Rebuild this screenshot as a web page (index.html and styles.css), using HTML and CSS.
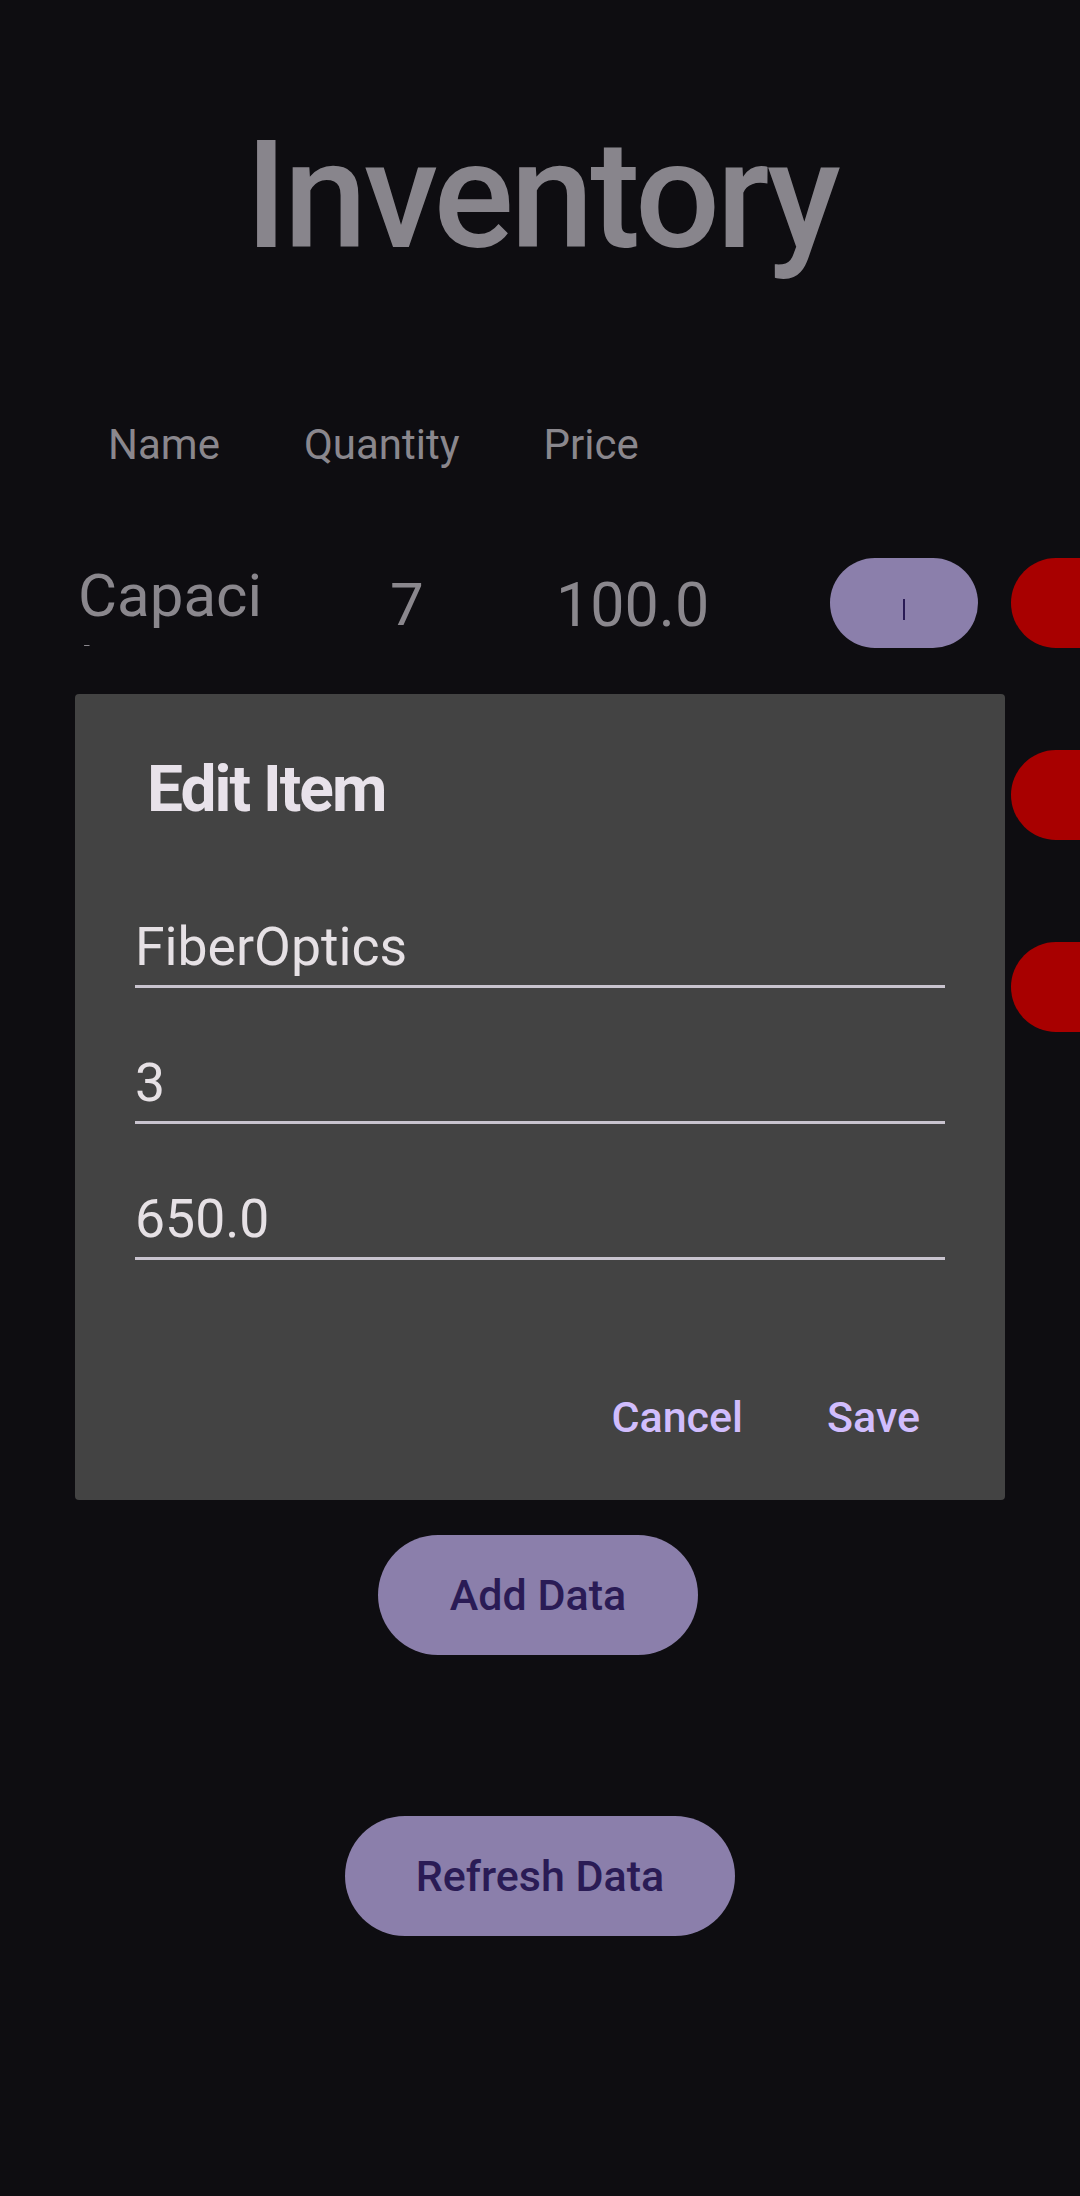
FILE: index.html
```html
<!DOCTYPE html>
<html lang="en">
<head>
<meta charset="utf-8">
<title>Inventory</title>
<link rel="stylesheet" href="styles.css">
</head>
<body>
<main class="screen">
  <h1 class="title">Inventory</h1>

  <div class="header-row">
    <span class="head">Name</span>
    <span class="head">Quantity</span>
    <span class="head">Price</span>
  </div>

  <div class="list">
    <div class="row">
      <div class="cell name">Capacitor</div>
      <div class="cell qty">7</div>
      <div class="cell price">100.0</div>
      <button class="pill edit" type="button" aria-label="Edit"><span class="edit-mark"></span></button>
      <button class="pill delete" type="button" aria-label="Delete"></button>
    </div>
    <div class="row">
      <div class="cell name"></div>
      <div class="cell qty"></div>
      <div class="cell price"></div>
      <button class="pill edit" type="button" aria-label="Edit"></button>
      <button class="pill delete" type="button" aria-label="Delete"></button>
    </div>
    <div class="row">
      <div class="cell name"></div>
      <div class="cell qty"></div>
      <div class="cell price"></div>
      <button class="pill edit" type="button" aria-label="Edit"></button>
      <button class="pill delete" type="button" aria-label="Delete"></button>
    </div>
  </div>

  <button class="action add" type="button">Add Data</button>
  <button class="action refresh" type="button">Refresh Data</button>
</main>

<div class="dialog" role="dialog" aria-label="Edit Item">
  <h2 class="dialog-title">Edit Item</h2>
  <div class="fields">
    <div class="field">FiberOptics</div>
    <div class="field">3</div>
    <div class="field">650.0</div>
  </div>
  <div class="dialog-actions">
    <span class="text-btn">Cancel</span>
    <span class="text-btn">Save</span>
  </div>
</div>
</body>
</html>
```

FILE: styles.css
```css
html, body {
  margin: 0;
  padding: 0;
  width: 1080px;
  height: 2196px;
  overflow: hidden;
  background: #0e0d11;
  font-family: Roboto, "Noto Sans", "Liberation Sans", sans-serif;
}

.screen {
  position: relative;
  display: flex;
  flex-direction: column;
  align-items: stretch;
  width: 1080px;
  height: 2196px;
}

.title {
  margin: 0;
  padding-top: 108px;
  padding-left: 2px;
  font-size: 150px;
  font-weight: 500;
  letter-spacing: -3.6px;
  line-height: 176px;
  text-align: center;
  color: #88858c;
}

.header-row {
  display: flex;
  gap: 84px;
  margin-top: 136px;
  padding-left: 108px;
  font-size: 42px;
  line-height: 49px;
  color: #8a878d;
}

.list {
  display: flex;
  flex-direction: column;
  gap: 102px;
  margin-top: 89px;
}

.row {
  display: flex;
  align-items: center;
  height: 90px;
  padding-left: 78px;
  font-size: 60px;
  color: #8a878d;
}

.cell {
  flex: none;
  line-height: 70px;
}

.name {
  align-self: flex-start;
  width: 192px;
  height: 84px;
  margin-top: 4px;
  line-height: 68px;
  overflow: hidden;
  word-break: break-all;
}

.qty {
  width: 166px;
  margin-left: 120px;
  margin-top: 3px;
}

.price {
  width: 274px;
  margin-top: 3px;
  font-size: 61px;
}

.pill {
  flex: none;
  display: flex;
  align-items: center;
  justify-content: center;
  width: 148px;
  height: 90px;
  border: 0;
  border-radius: 45px;
  padding: 0;
}

.edit {
  background: #8b7fab;
}

.edit-mark {
  display: block;
  width: 2px;
  height: 21px;
  margin-top: 12px;
  background: #2a1b55;
}

.delete {
  margin-left: 33px;
  background: #a80000;
}

.action {
  align-self: center;
  height: 120px;
  border: 0;
  border-radius: 60px;
  background: #8b7fab;
  color: #2a1b55;
  font-family: Roboto, "Noto Sans", sans-serif;
  font-size: 43px;
  font-weight: 500;
  padding: 0;
}

.add {
  width: 320px;
  margin-top: 503px;
  margin-left: -4px;
}

.refresh {
  width: 390px;
  margin-top: 161px;
}

.dialog {
  position: absolute;
  left: 75px;
  top: 694px;
  width: 930px;
  height: 806px;
  box-sizing: border-box;
  background: #434343;
  border-radius: 4px;
  padding-top: 58px;
  display: flex;
  flex-direction: column;
}

.dialog-title {
  margin: 0 0 0 72px;
  font-size: 64px;
  font-weight: 700;
  letter-spacing: -2px;
  line-height: 75px;
  color: #e8e2ea;
}

.fields {
  display: flex;
  flex-direction: column;
  gap: 64px;
  margin: 89px 60px 0;
}

.field {
  font-size: 53.5px;
  line-height: 61px;
  padding-bottom: 8px;
  border-bottom: 3px solid #c9c4cf;
  color: #e6e1e5;
}

.dialog-actions {
  display: flex;
  justify-content: flex-end;
  gap: 84px;
  margin-top: 132px;
  padding-right: 85px;
}

.text-btn {
  font-size: 43px;
  font-weight: 500;
  line-height: 50px;
  color: #d1bdfd;
}
```
